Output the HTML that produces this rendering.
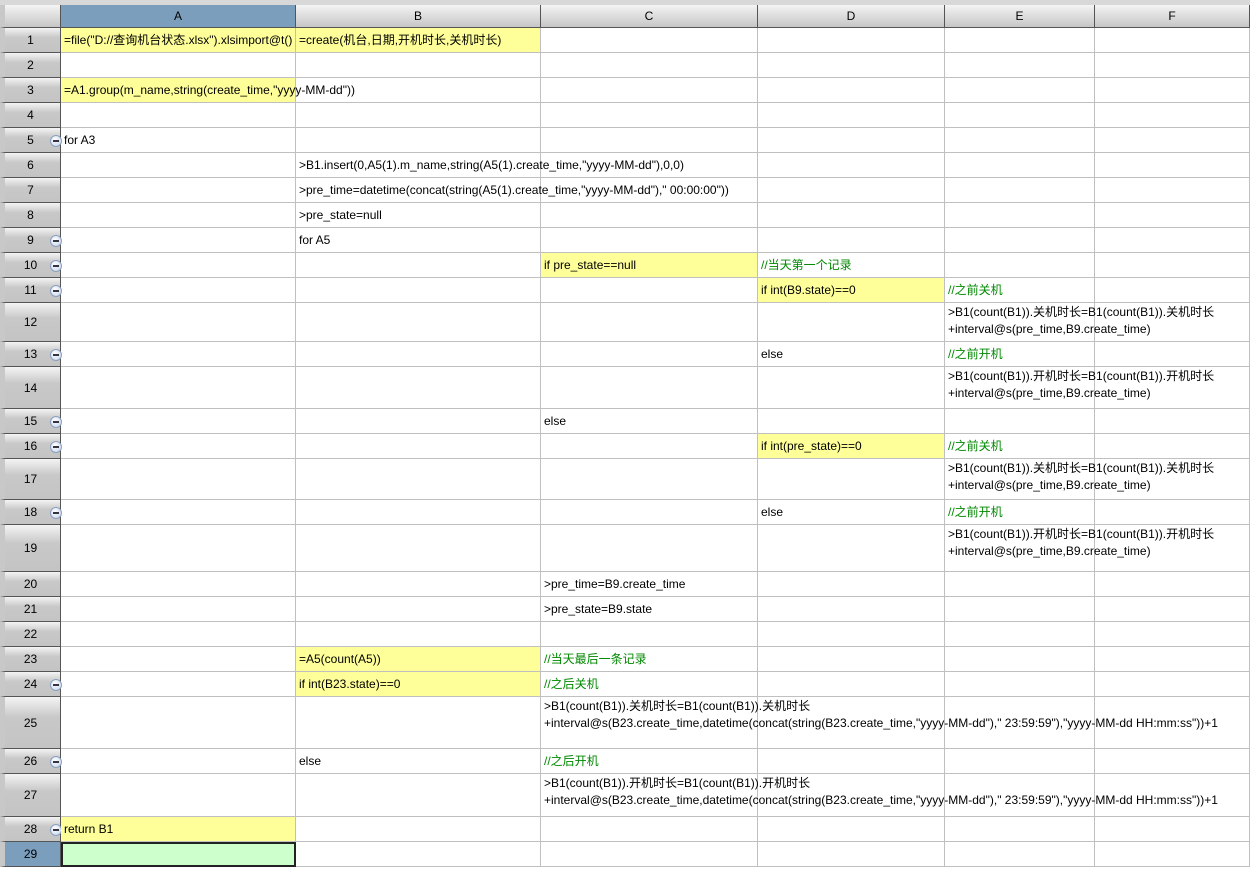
<!DOCTYPE html>
<html><head><meta charset="utf-8"><style>
body{margin:0;width:1250px;height:870px;background:#fff;position:relative;overflow:hidden;font-family:"Liberation Sans","Noto Sans CJK SC",sans-serif;font-size:12px;color:#000}
.c{position:absolute;box-sizing:border-box;border-right:1px solid #c0c0c0;border-bottom:1px solid #c0c0c0}
.y{background:#ffff99}
.g{color:#008800}
.rh{position:absolute;left:0;width:61px;box-sizing:border-box;border-bottom:1px solid #555;border-right:1px solid #555;background:linear-gradient(#f4f4f4,#c8c8c8 40%,#c4c4c4);border-left:5px solid #c8c8c8;display:flex;align-items:center;justify-content:center;font-size:12px}
.rh span{position:relative;left:-2px}
.ic{position:absolute;left:45px;width:12px;height:12px;border-radius:50%;border:1px solid #8aa0bf;background:radial-gradient(circle at 40% 35%,#fff,#c4d3ea);box-sizing:border-box}
.ic:after{content:"";position:absolute;left:2px;top:4px;width:6px;height:2px;background:#334}
.ch{position:absolute;top:5px;height:23px;box-sizing:border-box;border-right:1px solid #555;border-bottom:1px solid #555;background:linear-gradient(#f4f4f4,#c6c6c6);display:flex;align-items:center;justify-content:center}
.t{position:absolute;z-index:2;white-space:nowrap;line-height:17px}
</style></head><body>
<div style="position:absolute;left:0;top:0;width:1250px;height:5px;background:#d8d8d8"></div>
<div class="ch" style="left:0;width:61px;border-left:5px solid #c8c8c8"></div>
<div class="ch" style="left:61px;width:235px;background:#7b9ebd">A</div>
<div class="ch" style="left:296px;width:245px">B</div>
<div class="ch" style="left:541px;width:217px">C</div>
<div class="ch" style="left:758px;width:187px">D</div>
<div class="ch" style="left:945px;width:150px">E</div>
<div class="ch" style="left:1095px;width:155px">F</div>
<div id="g"></div>
<script>
var R=[28,53,78,103,128,153,178,203,228,253,278,303,342,367,409,434,459,500,525,572,597,622,647,672,697,749,774,817,842,867];
var C=[61,296,541,758,945,1095,1250];
var icons=[5,9,10,11,13,15,16,18,24,26,28];
var yel={"0,0":1,"0,1":1,"2,0":1,"9,2":1,"10,3":1,"15,3":1,"22,1":1,"23,1":1,"27,0":1};
var h="";
for(var r=0;r<29;r++){
 var t=R[r],hh=R[r+1]-t;
 h+='<div class="rh" style="top:'+t+'px;height:'+hh+'px;'+(r==28?'background:#7b9ebd;':'')+'"><span>'+(r+1)+'</span>'+(icons.indexOf(r+1)>=0?'<div class="ic" style="top:'+(hh/2-6)+'px"></div>':'')+'</div>';
 for(var c=0;c<6;c++){
  var cls="c"+(yel[r+","+c]?" y":"");
  var st="left:"+C[c]+"px;top:"+t+"px;width:"+(C[c+1]-C[c])+"px;height:"+hh+"px;";
  if(r==28&&c==0)st+="background:#ccffcc;border:2px solid #222;";
  h+='<div class="'+cls+'" style="'+st+'"></div>';
 }
}
document.getElementById("g").innerHTML=h;
</script>
<div class="t" style="left:64px;top:32px">=file("D://查询机台状态.xlsx").xlsimport@t()</div>
<div class="t" style="left:299px;top:32px">=create(机台,日期,开机时长,关机时长)</div>
<div class="t" style="left:64px;top:82px">=A1.group(m_name,string(create_time,"yyyy-MM-dd"))</div>
<div class="t" style="left:64px;top:132px">for A3</div>
<div class="t" style="left:299px;top:157px">&gt;B1.insert(0,A5(1).m_name,string(A5(1).create_time,"yyyy-MM-dd"),0,0)</div>
<div class="t" style="left:299px;top:182px">&gt;pre_time=datetime(concat(string(A5(1).create_time,"yyyy-MM-dd")," 00:00:00"))</div>
<div class="t" style="left:299px;top:207px">&gt;pre_state=null</div>
<div class="t" style="left:299px;top:232px">for A5</div>
<div class="t" style="left:544px;top:257px">if pre_state==null</div>
<div class="t g" style="left:761px;top:257px">//当天第一个记录</div>
<div class="t" style="left:761px;top:282px">if int(B9.state)==0</div>
<div class="t g" style="left:948px;top:282px">//之前关机</div>
<div class="t" style="left:948px;top:304px">&gt;B1(count(B1)).关机时长=B1(count(B1)).关机时长<br>+interval@s(pre_time,B9.create_time)</div>
<div class="t" style="left:761px;top:346px">else</div>
<div class="t g" style="left:948px;top:346px">//之前开机</div>
<div class="t" style="left:948px;top:368px">&gt;B1(count(B1)).开机时长=B1(count(B1)).开机时长<br>+interval@s(pre_time,B9.create_time)</div>
<div class="t" style="left:544px;top:413px">else</div>
<div class="t" style="left:761px;top:438px">if int(pre_state)==0</div>
<div class="t g" style="left:948px;top:438px">//之前关机</div>
<div class="t" style="left:948px;top:460px">&gt;B1(count(B1)).关机时长=B1(count(B1)).关机时长<br>+interval@s(pre_time,B9.create_time)</div>
<div class="t" style="left:761px;top:504px">else</div>
<div class="t g" style="left:948px;top:504px">//之前开机</div>
<div class="t" style="left:948px;top:526px">&gt;B1(count(B1)).开机时长=B1(count(B1)).开机时长<br>+interval@s(pre_time,B9.create_time)</div>
<div class="t" style="left:544px;top:576px">&gt;pre_time=B9.create_time</div>
<div class="t" style="left:544px;top:601px">&gt;pre_state=B9.state</div>
<div class="t" style="left:299px;top:651px">=A5(count(A5))</div>
<div class="t g" style="left:544px;top:651px">//当天最后一条记录</div>
<div class="t" style="left:299px;top:676px">if int(B23.state)==0</div>
<div class="t g" style="left:544px;top:676px">//之后关机</div>
<div class="t" style="left:544px;top:698px">&gt;B1(count(B1)).关机时长=B1(count(B1)).关机时长<br>+interval@s(B23.create_time,datetime(concat(string(B23.create_time,"yyyy-MM-dd")," 23:59:59"),"yyyy-MM-dd HH:mm:ss"))+1</div>
<div class="t" style="left:299px;top:753px">else</div>
<div class="t g" style="left:544px;top:753px">//之后开机</div>
<div class="t" style="left:544px;top:775px">&gt;B1(count(B1)).开机时长=B1(count(B1)).开机时长<br>+interval@s(B23.create_time,datetime(concat(string(B23.create_time,"yyyy-MM-dd")," 23:59:59"),"yyyy-MM-dd HH:mm:ss"))+1</div>
<div class="t" style="left:64px;top:821px">return B1</div>
</body></html>
